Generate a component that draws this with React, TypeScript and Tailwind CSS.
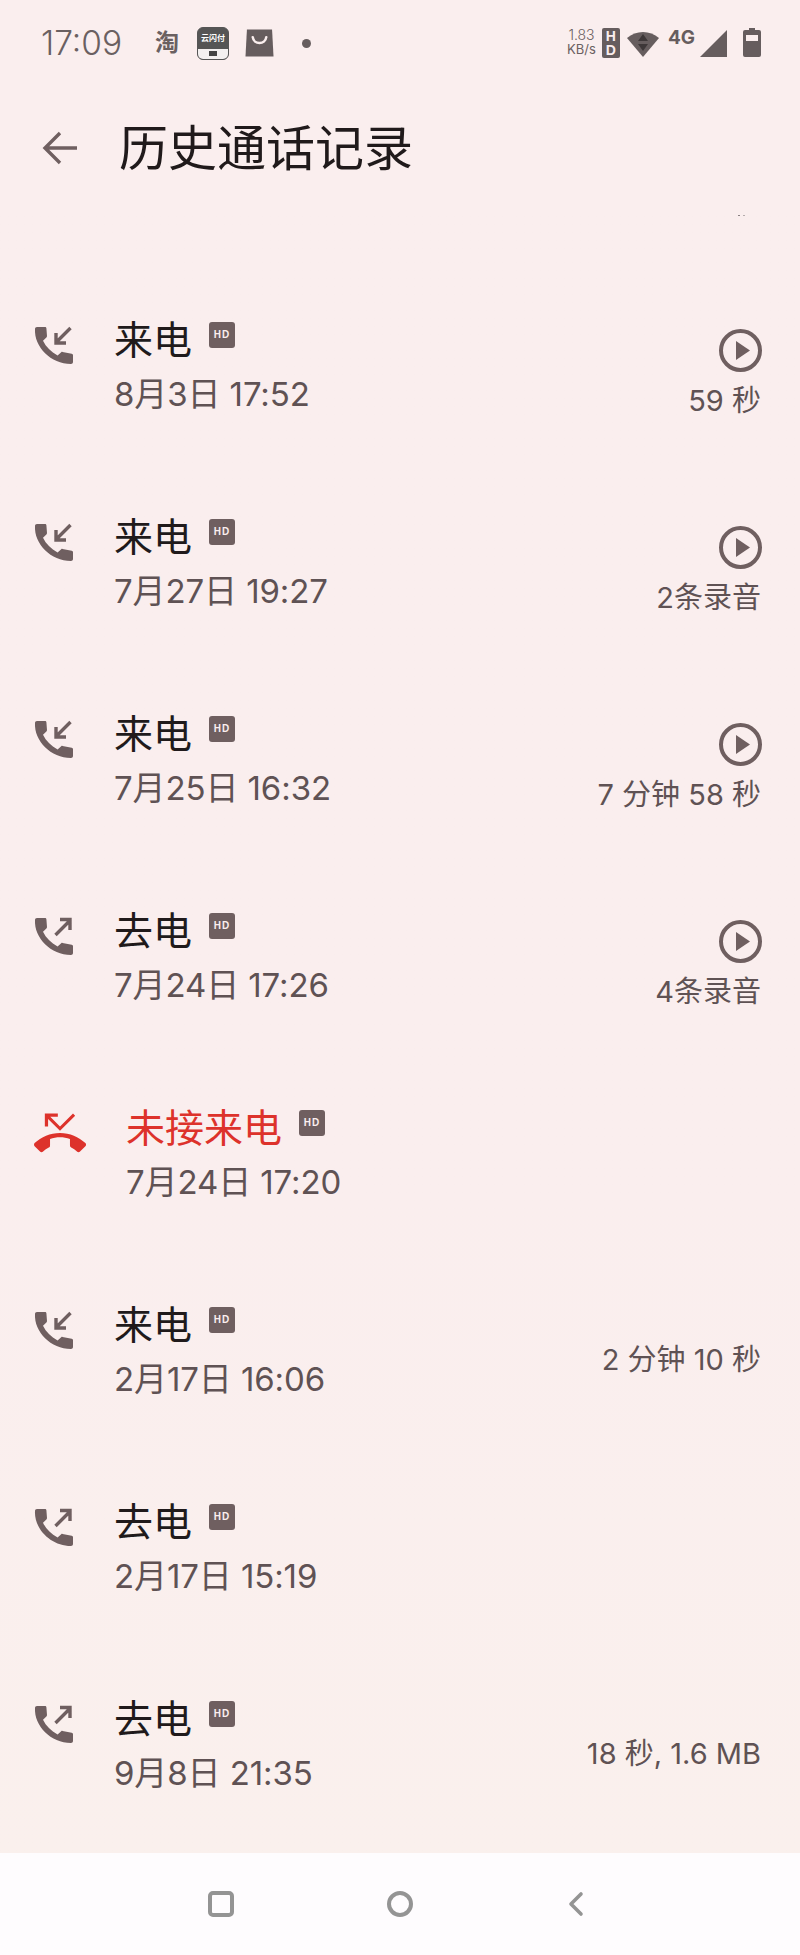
const sans = "font-['Inter','Noto_Sans_CJK_SC',sans-serif]"

type Call = {
  kind: 'in' | 'out' | 'missed'
  label: string
  time: string
  note?: string
  play?: boolean
}

const calls: Call[] = [
  { kind: 'in', label: '来电', time: '8月3日 17:52', note: '59 秒', play: true },
  { kind: 'in', label: '来电', time: '7月27日 19:27', note: '2条录音', play: true },
  { kind: 'in', label: '来电', time: '7月25日 16:32', note: '7 分钟 58 秒', play: true },
  { kind: 'out', label: '去电', time: '7月24日 17:26', note: '4条录音', play: true },
  { kind: 'missed', label: '未接来电', time: '7月24日 17:20' },
  { kind: 'in', label: '来电', time: '2月17日 16:06', note: '2 分钟 10 秒' },
  { kind: 'out', label: '去电', time: '2月17日 15:19' },
  { kind: 'out', label: '去电', time: '9月8日 21:35', note: '18 秒, 1.6 MB' },
]

const phonePath =
  'M3 1h8c.8 0 1.3.5 1.4 1.2L13 10c0 .6-.2 1-.6 1.4L9 14.8C12 21 17 26 23.6 29.4l3.6-3.2c.4-.3.8-.4 1.3-.3l9.2 1.8c.8.2 1.3.7 1.3 1.5V36c0 1.2-.9 2-2 2C17 38 0 21 1 3c0-1.2.8-2 2-2z'

function CallIcon({ kind }: { kind: Call['kind'] }) {
  if (kind === 'missed') {
    return (
      <svg viewBox="0 0 24 24" className="h-[52px] w-[52px] fill-[#dd322b]">
        <path d="M6.5 5.5 12 11l7-7-1-1-6 6-4.5-4.5H11V3H5v6h1.5V5.5zm17.21 11.17C20.66 13.78 16.54 12 12 12 7.46 12 3.34 13.78.29 16.67c-.18.18-.29.43-.29.71s.11.53.29.71l2.48 2.48c.18.18.43.29.71.29.27 0 .52-.11.7-.28.79-.74 1.69-1.36 2.66-1.85.33-.16.56-.5.56-.9v-3.1c1.45-.48 3-.73 4.6-.73 1.6 0 3.15.25 4.6.72v3.1c0 .39.23.74.56.9.98.49 1.87 1.12 2.67 1.85.18.18.43.28.7.28.28 0 .53-.11.71-.29l2.48-2.48c.18-.18.29-.43.29-.71s-.11-.53-.29-.71z" />
      </svg>
    )
  }
  return (
    <svg viewBox="0 0 40 38" className="h-[38px] w-[40px]">
      <path d={phonePath} fill="#6f5f60" />
      {kind === 'in' ? (
        <path d="M36.5 2 23 15.5M22 7v10h10" fill="none" stroke="#6f5f60" strokeWidth="3.4" />
      ) : (
        <path d="M21.5 18 35.5 4M26 2.5h10V13" fill="none" stroke="#6f5f60" strokeWidth="3.4" />
      )}
    </svg>
  )
}

function HdBadge() {
  return (
    <span className="-mt-[8px] ml-[17px] flex h-[26px] w-[26px] items-center justify-center rounded-[3px] bg-[#6f5f60] font-['Liberation_Sans',sans-serif] text-[10px] leading-none font-bold tracking-[1px] text-[#faeeee]">
      HD
    </span>
  )
}

function PlayIcon() {
  return (
    <svg viewBox="0 0 43 43" className="h-[43px] w-[43px]">
      <circle cx="21.5" cy="21.5" r="19.5" fill="none" stroke="#6f5f60" strokeWidth="4" />
      <path d="M17 12v19l14-9.5z" fill="#6f5f60" />
    </svg>
  )
}

function CallRow({ call }: { call: Call }) {
  const missed = call.kind === 'missed'
  return (
    <div className="flex h-[197px] items-start pr-[39px]">
      <div className={missed ? 'mt-[3px] ml-[34px] w-[92px] shrink-0' : 'mt-[10px] ml-[34px] w-[80px] shrink-0'}>
        <CallIcon kind={call.kind} />
      </div>
      <div className="min-w-0 flex-1">
        <div className="flex h-[46px] items-center">
          <span className={missed ? 'text-[39px] leading-none text-[#dd322b]' : 'text-[39px] leading-none text-[#201a1b]'}>
            {call.label}
          </span>
          <HdBadge />
        </div>
        <div className="mt-[10px] text-[33px] leading-[44px] tracking-[-0.1px] text-[#5f5254]">{call.time}</div>
      </div>
      <div className="flex flex-col items-end">
        {call.play ? (
          <div className="mt-[13px] -mr-[1px] mb-[8px] h-[43px]">
            <PlayIcon />
          </div>
        ) : (
          <div className="h-[38px]" />
        )}
        <div className="text-[29px] leading-[42px] text-[#5f5254]">{call.note}</div>
      </div>
    </div>
  )
}

function StatusBar() {
  return (
    <div className="flex h-[86px] shrink-0 items-start justify-between pt-[26px] pr-[39px] pl-[41px]">
      <div className="flex items-center">
        <span className="text-[33.5px] leading-[34px] font-light text-[#6a6061]">17:09</span>
        <span className="ml-[33px] text-[24px] leading-[34px] font-bold text-[#6a6061]">淘</span>
        <div className="ml-[18px] flex h-[33px] w-[32px] flex-col overflow-hidden rounded-[6px] border border-[#555] bg-[#555]">
          <div className="flex h-[21px] flex-col items-center justify-center text-[8px] leading-[9px] font-bold text-white">
            云闪付
          </div>
          <div className="flex flex-1 items-center justify-center bg-[#f3f0f0]">
            <div className="h-[5px] w-[8px] bg-[#444]" />
          </div>
        </div>
        <svg viewBox="0 0 30 30" className="ml-[16px] h-[30px] w-[29px]">
          <path d="M2 1h26l1.5 28H.5z" fill="#665d5e" />
          <path d="M8 9c1 8 13 8 14 0" fill="none" stroke="#faeeee" strokeWidth="2.6" strokeLinecap="round" />
        </svg>
        <span className="ml-[28px] h-[9px] w-[9px] rounded-full bg-[#665d5e]" />
      </div>
      <div className="mt-[2px] flex items-start">
        <div className="flex flex-col items-center text-[13px] leading-[14px] text-[#6a6061]">
          <span className="text-[14px] font-light">1.83</span>
          <span>KB/s</span>
        </div>
        <div className="ml-[6px] flex h-[30px] w-[18px] flex-col items-center justify-center rounded-[2px] bg-[#665d5e] font-['Liberation_Sans',sans-serif] text-[14px] leading-[14px] font-bold text-[#faeeee]">
          <span>H</span>
          <span>D</span>
        </div>
        <svg viewBox="0 0 32 28" className="mt-[1px] ml-[7px] h-[28px] w-[32px]">
          <path d="M0 9C9 1 23 1 32 9L16 28z" fill="#665d5e" />
          <path d="m16 5 5 7H11zM11 15h10l-5 7z" fill="#3d3738" />
        </svg>
        <span className="ml-[9px] text-[19px] leading-[20px] font-bold text-[#665d5e]">4G</span>
        <svg viewBox="0 0 27 27" className="mt-[2px] ml-[5px] h-[27px] w-[27px]">
          <path d="M27 0v27H0z" fill="#665d5e" />
        </svg>
        <svg viewBox="0 0 18 29" className="ml-[16px] h-[29px] w-[18px]">
          <path d="M6 0h6v2h4a2 2 0 0 1 2 2v23a2 2 0 0 1-2 2H2a2 2 0 0 1-2-2V4a2 2 0 0 1 2-2h4z" fill="#665d5e" />
          <path d="M3 7h12v6H3z" fill="#faeeee" />
        </svg>
      </div>
    </div>
  )
}

export default function App() {
  return (
    <div className={`flex h-[1955px] w-[800px] flex-col overflow-hidden bg-[#faeeee] ${sans}`}>
      <StatusBar />
      <div className="relative flex h-[124px] shrink-0 items-center pl-[41px]">
        <svg viewBox="0 0 36 36" className="h-[36px] w-[36px]">
          <path d="M36 18H4M19 3 4 18l15 15" fill="none" stroke="#6f5f60" strokeWidth="3.4" />
        </svg>
        <h1 className="ml-[42px] text-[49px] leading-none font-normal text-[#201a1b]">历史通话记录</h1>
        <div className="absolute top-[129px] left-[738px] flex gap-[3px]">
          <span className="h-[1px] w-[2px] bg-[#8a8082]" />
          <span className="h-[1px] w-[2px] bg-[#b5acad]" />
        </div>
      </div>
      <div className="min-h-0 flex-1 overflow-hidden bg-gradient-to-b from-[#faeeee] from-60% to-[#faf0ed] pt-[106px]">
        {calls.map((call) => (
          <CallRow key={call.time} call={call} />
        ))}
      </div>
      <div className="flex h-[102px] shrink-0 items-center justify-center gap-[153px] bg-[#fefcfe] pr-[8px]">
        <span className="h-[26px] w-[26px] rounded-[5px] border-[4px] border-[#949494]" />
        <span className="h-[26px] w-[26px] rounded-full border-[4px] border-[#949494]" />
        <svg viewBox="0 0 18 26" className="h-[26px] w-[18px]">
          <path d="M15 3 5 13l10 10" fill="none" stroke="#949494" strokeWidth="3.6" strokeLinecap="round" strokeLinejoin="round" />
        </svg>
      </div>
    </div>
  )
}
